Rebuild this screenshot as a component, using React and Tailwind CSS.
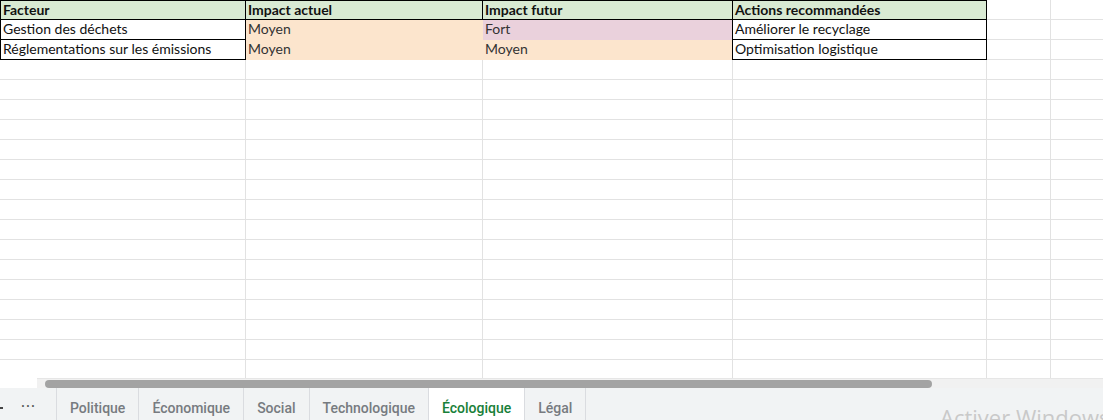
import React from 'react';

const cols = [246, 237, 250, 254, 64, 100];

const header = ['Facteur', 'Impact actuel', 'Impact futur', 'Actions recommandées'];

const rows = [
  ['Gestion des déchets', 'Moyen', 'Fort', 'Améliorer le recyclage'],
  ['Réglementations sur les émissions', 'Moyen', 'Moyen', 'Optimisation logistique'],
];

const fills = [
  ['', 'bg-[#fce5cd]', 'bg-[#ead1dc]', ''],
  ['', 'bg-[#fce5cd]', 'bg-[#fce5cd]', ''],
];

const tabs = ['Politique', 'Économique', 'Social', 'Technologique', 'Écologique', 'Légal'];

function Cell({ w, className = '', children }) {
  return (
    <div
      style={{ width: w }}
      className={`h-5 shrink-0 box-border pl-[2px] text-[14px] leading-[18px] truncate ${className}`}
    >
      {children}
    </div>
  );
}

function HeaderRow() {
  return (
    <div className="flex">
      {cols.map((w, i) => {
        if (i < 4) {
          return (
            <Cell
              key={i}
              w={w}
              className={`bg-[#d9ead3] font-bold text-[#111] border-t border-r border-b border-black ${i === 0 ? 'border-l' : ''}`}
            >
              {header[i]}
            </Cell>
          );
        }
        return <Cell key={i} w={w} className="border-r border-b border-[#e2e2e2]" />;
      })}
    </div>
  );
}

function DataRow({ r }) {
  return (
    <div className="flex">
      <Cell w={cols[0]} className="border-l border-r border-b border-black text-[#111]">{rows[r][0]}</Cell>
      <Cell w={cols[1]} className={`${fills[r][1]} text-[#333]`}>{rows[r][1]}</Cell>
      <Cell w={cols[2]} className={`${fills[r][2]} text-[#333] border-r border-black`}>{rows[r][2]}</Cell>
      <Cell w={cols[3]} className="border-r border-b border-black text-[#111]">{rows[r][3]}</Cell>
      <Cell w={cols[4]} className="border-r border-b border-[#e2e2e2]" />
      <Cell w={cols[5]} className="border-r border-b border-[#e2e2e2]" />
    </div>
  );
}

function EmptyRow() {
  return (
    <div className="flex">
      {cols.map((w, i) => (
        <Cell key={i} w={w} className="border-r border-b border-[#e2e2e2]" />
      ))}
    </div>
  );
}

export default function App() {
  return (
    <div className="relative w-[1103px] h-[420px] overflow-hidden bg-white font-['Lato','Liberation_Sans',sans-serif]">
      {/* grid */}
      <div className="h-[378px] overflow-hidden">
        <HeaderRow />
        <DataRow r={0} />
        <DataRow r={1} />
        {Array.from({ length: 16 }).map((_, i) => (
          <EmptyRow key={i} />
        ))}
      </div>

      {/* horizontal scrollbar */}
      <div className="flex h-[10px]">
        <div className="w-[37px] bg-white" />
        <div className="flex-1 bg-[#f1f1f1] border-t border-[#e6e6e6] flex items-center pl-2">
          <div className="h-[8px] w-[887px] rounded-full bg-[#a3a3a3]" />
        </div>
      </div>

      {/* sheet tabs */}
      <div className="flex h-10 bg-[#f1f3f4] font-['Roboto','Liberation_Sans',sans-serif] text-[14px] font-medium text-[#777b80]">
        <div className="w-[57px] flex items-center border-r border-[#dadce0] shrink-0">
          <div className="w-[4px] h-[2px] bg-[#444] ml-[-1px]" />
          <span className="ml-[18px] text-[#555] tracking-[1px] leading-none pb-1">···</span>
        </div>
        {tabs.map((t) => {
          const active = t === 'Écologique';
          return (
            <div
              key={t}
              className={`px-[13px] flex items-center border-r border-[#dadce0] shrink-0 ${active ? 'bg-white text-[#188038]' : ''}`}
            >
              {t}
            </div>
          );
        })}
      </div>

      {/* watermark */}
      <div className="absolute left-[940px] top-[406px] text-[22px] text-[#c9c9c9] font-['Open_Sans',sans-serif] whitespace-nowrap leading-none">
        Activer Windows
      </div>
    </div>
  );
}
